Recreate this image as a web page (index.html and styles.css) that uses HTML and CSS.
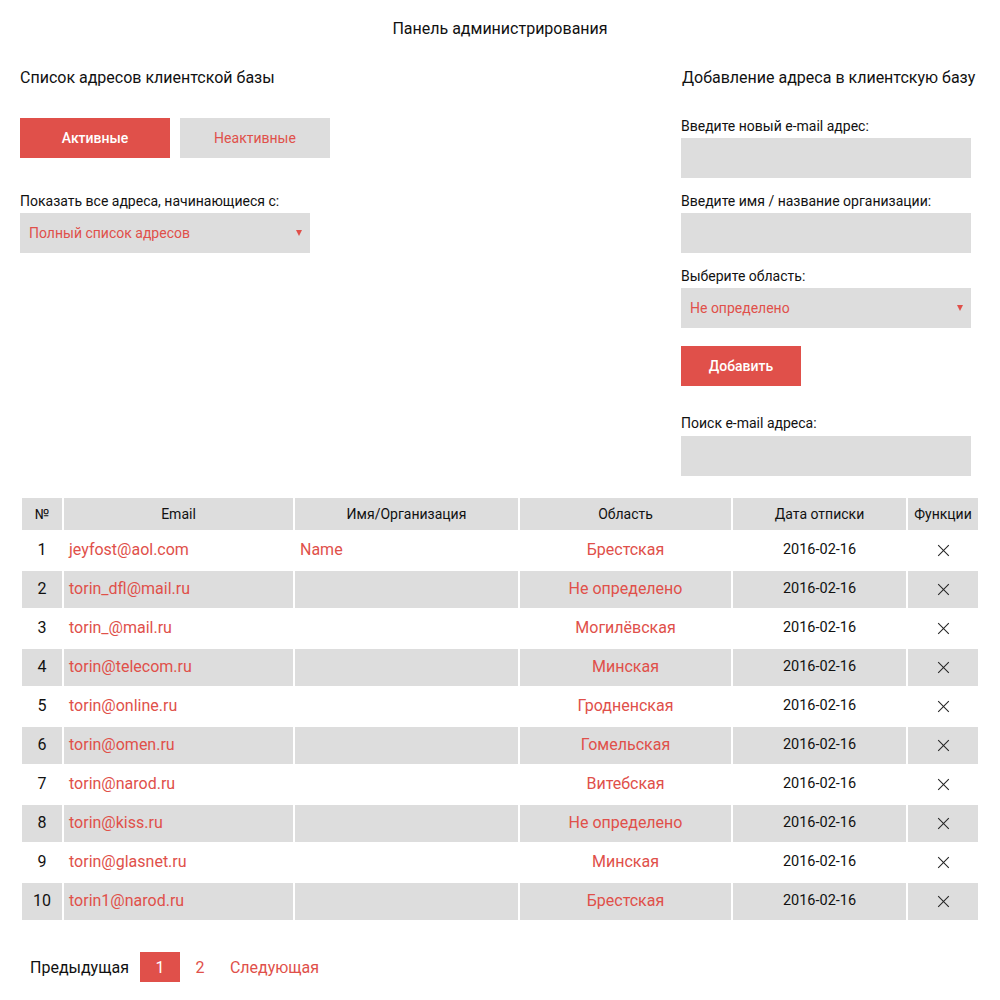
FILE: index.html
```html
<!DOCTYPE html>
<html lang="ru">
<head>
<meta charset="utf-8">
<title>Панель администрирования</title>
<link rel="stylesheet" href="styles.css">
</head>
<body>
<div class="page">
  <h1 class="title">Панель администрирования</h1>
  <div class="top">
    <section class="left">
      <h2 class="heading">Список адресов клиентской базы</h2>
      <div class="tabs">
        <button class="tab tab-active">Активные</button>
        <button class="tab">Неактивные</button>
      </div>
      <label class="label label-filter">Показать все адреса, начинающиеся с:</label>
      <div class="select"><span>Полный список адресов</span><span class="arrow"></span></div>
    </section>
    <section class="right">
      <h2 class="heading">Добавление адреса в клиентскую базу</h2>
      <label class="label label-first">Введите новый e-mail адрес:</label>
      <div class="input"></div>
      <label class="label">Введите имя / название организации:</label>
      <div class="input"></div>
      <label class="label">Выберите область:</label>
      <div class="select"><span>Не определено</span><span class="arrow"></span></div>
      <button class="add">Добавить</button>
      <label class="label label-search">Поиск e-mail адреса:</label>
      <div class="input"></div>
    </section>
  </div>
  <table class="list">
    <colgroup>
      <col class="c-num"><col class="c-email"><col class="c-name"><col class="c-region"><col class="c-date"><col class="c-fn">
    </colgroup>
    <thead>
      <tr><th>№</th><th>Email</th><th>Имя/Организация</th><th>Область</th><th>Дата отписки</th><th>Функции</th></tr>
    </thead>
    <tbody>
      <tr><td class="num">1</td><td class="email">jeyfost@aol.com</td><td class="name">Name</td><td class="region">Брестская</td><td class="date">2016-02-16</td><td class="fn"><span class="x"></span></td></tr>
      <tr><td class="num">2</td><td class="email">torin_dfl@mail.ru</td><td class="name"></td><td class="region">Не определено</td><td class="date">2016-02-16</td><td class="fn"><span class="x"></span></td></tr>
      <tr><td class="num">3</td><td class="email">torin_@mail.ru</td><td class="name"></td><td class="region">Могилёвская</td><td class="date">2016-02-16</td><td class="fn"><span class="x"></span></td></tr>
      <tr><td class="num">4</td><td class="email">torin@telecom.ru</td><td class="name"></td><td class="region">Минская</td><td class="date">2016-02-16</td><td class="fn"><span class="x"></span></td></tr>
      <tr><td class="num">5</td><td class="email">torin@online.ru</td><td class="name"></td><td class="region">Гродненская</td><td class="date">2016-02-16</td><td class="fn"><span class="x"></span></td></tr>
      <tr><td class="num">6</td><td class="email">torin@omen.ru</td><td class="name"></td><td class="region">Гомельская</td><td class="date">2016-02-16</td><td class="fn"><span class="x"></span></td></tr>
      <tr><td class="num">7</td><td class="email">torin@narod.ru</td><td class="name"></td><td class="region">Витебская</td><td class="date">2016-02-16</td><td class="fn"><span class="x"></span></td></tr>
      <tr><td class="num">8</td><td class="email">torin@kiss.ru</td><td class="name"></td><td class="region">Не определено</td><td class="date">2016-02-16</td><td class="fn"><span class="x"></span></td></tr>
      <tr><td class="num">9</td><td class="email">torin@glasnet.ru</td><td class="name"></td><td class="region">Минская</td><td class="date">2016-02-16</td><td class="fn"><span class="x"></span></td></tr>
      <tr><td class="num">10</td><td class="email">torin1@narod.ru</td><td class="name"></td><td class="region">Брестская</td><td class="date">2016-02-16</td><td class="fn"><span class="x"></span></td></tr>
    </tbody>
  </table>
  <nav class="pager">
    <span class="prev">Предыдущая</span>
    <span class="page-num current">1</span>
    <span class="page-num">2</span>
    <span class="next">Следующая</span>
  </nav>
</div>
</body>
</html>
```

FILE: styles.css
```css
* { box-sizing: border-box; }
html, body { margin: 0; padding: 0; background: #fff; }
body { font-family: Roboto, "Liberation Sans", sans-serif; color: #111; }

.page { padding: 20px 20px 0 20px; }

.title {
  margin: 0;
  font-size: 16px;
  font-weight: 400;
  line-height: 18px;
  text-align: center;
}

.top {
  display: flex;
  justify-content: space-between;
  margin-top: 30px;
}

.left { width: 310px; display: flex; flex-direction: column; }
.right { width: 290px; margin-right: 9px; display: flex; flex-direction: column; }

.heading {
  margin: 0;
  font-size: 16px;
  font-weight: 400;
  line-height: 20px;
  white-space: nowrap;
}
.right .heading { margin-left: 1px; }

.tabs { display: flex; gap: 10px; margin-top: 30px; }
.tab {
  flex: none;
  width: 150px;
  height: 40px;
  border: 0;
  padding: 0;
  background: #dddddd;
  color: #e0504a;
  font-family: Roboto, "Liberation Sans", sans-serif;
  font-size: 14px;
  font-weight: 400;
}
.tab-active { background: #e0504a; color: #fff; font-weight: 500; }

.label {
  display: block;
  font-size: 14px;
  line-height: 16px;
  margin-top: 15px;
  margin-bottom: 4px;
  white-space: nowrap;
}
.label-filter { margin-top: 35px; }
.label-first { margin-top: 30px; }
.label-search { margin-top: 29px; margin-bottom: 5px; }

.input {
  height: 40px;
  background: #dddddd;
}

.select {
  width: 290px;
  height: 40px;
  background: #dddddd;
  display: flex;
  align-items: center;
  justify-content: space-between;
  padding: 0 9px;
  color: #e0504a;
  font-size: 14px;
}
.arrow {
  width: 0;
  height: 0;
  border-left: 3px solid transparent;
  border-right: 3px solid transparent;
  border-top: 6px solid #e0504a;
  margin-right: -1px;
}

.add {
  margin-top: 18px;
  width: 120px;
  height: 40px;
  border: 0;
  padding: 0;
  background: #e0504a;
  color: #fff;
  font-family: Roboto, "Liberation Sans", sans-serif;
  font-size: 14px;
  font-weight: 500;
}

.list {
  margin-top: 20px;
  width: 960px;
  table-layout: fixed;
  border-collapse: separate;
  border-spacing: 2px;
}
.c-num { width: 40px; }
.c-email { width: 229px; }
.c-name { width: 223px; }
.c-region { width: 211px; }
.c-date { width: 173px; }
.c-fn { width: 70px; }

.list th {
  height: 32px;
  padding: 0 0 1px 0;
  background: #dddddd;
  font-size: 14px;
  font-weight: 400;
  text-align: center;
  vertical-align: middle;
}
.list td {
  height: 37px;
  padding: 0 0 2px 0;
  vertical-align: middle;
  font-size: 16px;
}
.list tbody tr:nth-child(even) td { background: #dddddd; }

.num { text-align: center; color: #111; }
.email { padding-left: 5px !important; color: #e0504a; }
.name { padding-left: 5px !important; color: #e0504a; }
.region { text-align: center; color: #e0504a; }
.date { text-align: center; font-size: 14.5px !important; color: #111; }
.fn { text-align: center; }

.x {
  display: inline-block;
  position: relative;
  width: 13px;
  height: 13px;
  vertical-align: middle;
}
.x::before, .x::after {
  content: "";
  position: absolute;
  left: -1px;
  top: 6px;
  width: 15px;
  height: 1px;
  background: #222;
}
.x::before { transform: rotate(45deg); }
.x::after { transform: rotate(-45deg); }

.pager {
  display: flex;
  align-items: center;
  margin-top: 30px;
  padding-left: 10px;
  font-size: 16px;
}
.prev { color: #111; margin-right: 11px; }
.page-num {
  width: 40px;
  height: 30px;
  display: flex;
  align-items: center;
  justify-content: center;
  color: #e0504a;
}
.page-num.current { background: #e0504a; color: #fff; }
.next { color: #e0504a; margin-left: 10px; }
```
